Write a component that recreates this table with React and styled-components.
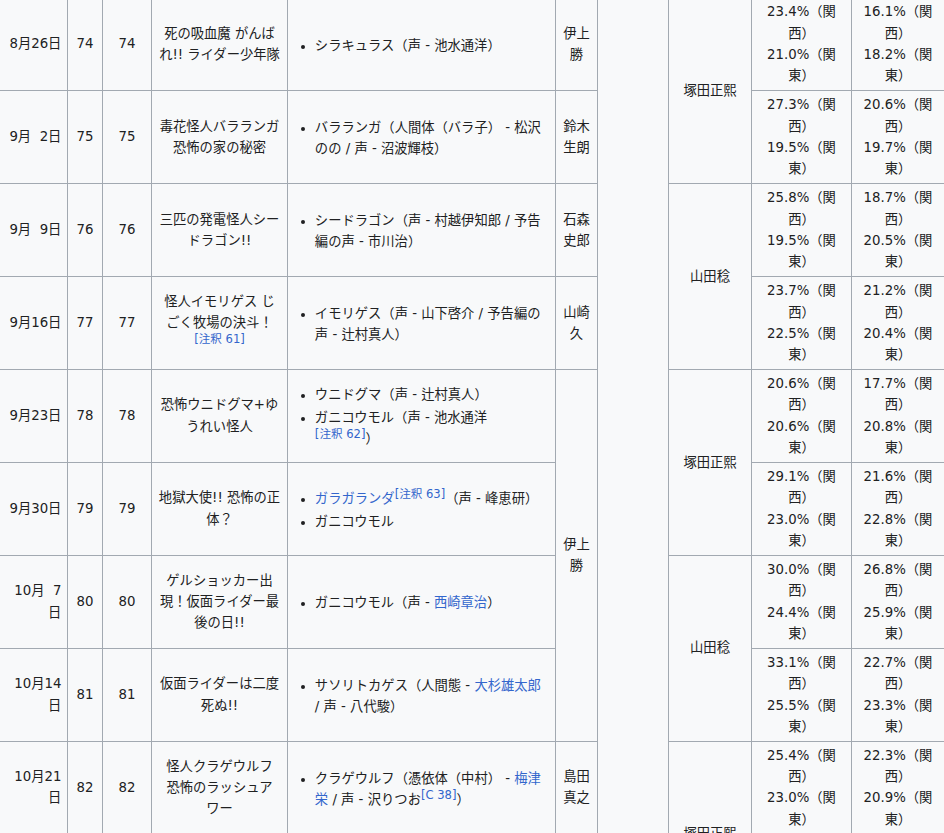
import React from 'react'
import styled, { createGlobalStyle } from 'styled-components'

const GlobalStyle = createGlobalStyle`
    body {
        margin: 0;
        background: #f8f9fa;
        overflow: hidden;
    }
`

const Table = styled.table`
    border-collapse: collapse;
    table-layout: fixed;
    width: 945px;
    margin: -3px 0 0 -1px;
    background: #f8f9fa;
    color: #202122;
    font-family: "DejaVu Sans", "Noto Sans CJK JP", sans-serif;
    font-size: 13.3px;
    line-height: 1.6;
    line-break: strict;
    border: 1px solid #a2a9b1;
`

const Cell = styled.td`
    border: 1px solid #a2a9b1;
    padding: 3.45px 5.6px;
    text-align: ${p => p.$align || 'center'};
    vertical-align: middle;
`

const Hidden = styled.span`
    visibility: hidden;
`

const CastList = styled.ul`
    margin: 0.3em 0 0 1.6em;
    padding: 0;
    list-style: disc;
`

const CastItem = styled.li`
    margin-bottom: 0.1em;
    &::marker {
        font-size: 0.9em;
    }
`

const Link = styled.a`
    color: #3366cc;
    text-decoration: none;
`

const Note = styled.sup`
    font-size: 87%;
    line-height: 1;
    white-space: nowrap;
    vertical-align: super;
`

const Ref = ({ children }) => (
    <Note><Link href="#">[{children}]</Link></Note>
)

const columns = [68, 35, 49, 136, 268, 42, 71, 83, 100, 93]

const episodes = [
    {
        date: <>8月26日</>, no: 74,
        title: <>死の吸血魔 がんばれ!! ライダー少年隊</>,
        cast: [<>シラキュラス（声 - 池水通洋）</>],
        writer: ['伊上勝', 1], director: ['塚田正熙', 2],
        rate: [['23.4', '21.0'], ['16.1', '18.2']],
    },
    {
        date: <>9月<Hidden>0</Hidden>2日</>, no: 75,
        title: <>毒花怪人バラランガ 恐怖の家の秘密</>,
        cast: [<>バラランガ（人間体（バラ子） - 松沢のの / 声 - 沼波輝枝）</>],
        writer: ['鈴木生朗', 1],
        rate: [['27.3', '19.5'], ['20.6', '19.7']],
    },
    {
        date: <>9月<Hidden>0</Hidden>9日</>, no: 76,
        title: <>三匹の発電怪人シードラゴン!!</>,
        cast: [<>シードラゴン（声 - 村越伊知郎 / 予告編の声 - 市川治）</>],
        writer: ['石森史郎', 1], director: ['山田稔', 2],
        rate: [['25.8', '19.5'], ['18.7', '20.5']],
    },
    {
        date: <>9月16日</>, no: 77,
        title: <>怪人イモリゲス じごく牧場の決斗！<Ref>注釈 61</Ref></>,
        cast: [<>イモリゲス（声 - 山下啓介 / 予告編の声 - 辻村真人）</>],
        writer: ['山崎久', 1],
        rate: [['23.7', '22.5'], ['21.2', '20.4']],
    },
    {
        date: <>9月23日</>, no: 78,
        title: <>恐怖ウニドグマ+ゆうれい怪人</>,
        cast: [
            <>ウニドグマ（声 - 辻村真人）</>,
            <>ガニコウモル（声 - 池水通洋<Ref>注釈 62</Ref>）</>,
        ],
        writer: ['伊上勝', 4], director: ['塚田正熙', 2],
        rate: [['20.6', '20.6'], ['17.7', '20.8']],
    },
    {
        date: <>9月30日</>, no: 79,
        title: <>地獄大使!! 恐怖の正体？</>,
        cast: [
            <><Link href="#">ガラガランダ</Link><Ref>注釈 63</Ref>（声 - 峰恵研）</>,
            <>ガニコウモル</>,
        ],
        rate: [['29.1', '23.0'], ['21.6', '22.8']],
    },
    {
        date: <>10月<Hidden>0</Hidden>7日</>, no: 80,
        title: <>ゲルショッカー出現！仮面ライダー最後の日!!</>,
        cast: [<>ガニコウモル（声 - <Link href="#">西崎章治</Link>）</>],
        director: ['山田稔', 2],
        rate: [['30.0', '24.4'], ['26.8', '25.9']],
    },
    {
        date: <>10月14日</>, no: 81,
        title: <>仮面ライダーは二度死ぬ!!</>,
        cast: [<>サソリトカゲス（人間態 - <Link href="#">大杉雄太郎</Link> / 声 - 八代駿）</>],
        rate: [['33.1', '25.5'], ['22.7', '23.3']],
    },
    {
        date: <>10月21日</>, no: 82,
        title: <>怪人クラゲウルフ 恐怖のラッシュアワー</>,
        cast: [<>クラゲウルフ（憑依体（中村） - <Link href="#">梅津栄</Link> / 声 - 沢りつお<Ref>C 38</Ref>）</>],
        writer: ['島田真之', 1], director: ['塚田正熙', 2],
        rate: [['25.4', '23.0'], ['22.3', '20.9']],
    },
    {
        date: <>10月28日</>, no: 83,
        title: <>怪人ヒルカメレオン 恐怖の吸血作戦</>,
        cast: [<>ヒルカメレオン（声 - 池水通洋）</>],
        writer: ['伊上勝', 1],
        rate: [['24.9', '22.1'], ['21.8', '20.6']],
    },
]

const Rating = ({ pair }) => (
    <Cell>
        {pair[0]}%（関西）<br />
        {pair[1]}%（関東）
    </Cell>
)

export default function App() {
    return (
        <>
            <GlobalStyle />
            <Table lang="ja">
                <colgroup>
                    {columns.map((w, i) => <col key={i} style={{ width: w }} />)}
                </colgroup>
                <tbody>
                    {episodes.map((ep, i) => (
                        <tr key={ep.no}>
                            <Cell $align="right">{ep.date}</Cell>
                            <Cell>{ep.no}</Cell>
                            <Cell>{ep.no}</Cell>
                            <Cell>{ep.title}</Cell>
                            <Cell $align="left">
                                <CastList>
                                    {ep.cast.map((c, j) => <CastItem key={j}>{c}</CastItem>)}
                                </CastList>
                            </Cell>
                            {ep.writer && <Cell rowSpan={ep.writer[1]}>{ep.writer[0]}</Cell>}
                            {i === 0 && <Cell rowSpan={episodes.length} />}
                            {ep.director && <Cell rowSpan={ep.director[1]}>{ep.director[0]}</Cell>}
                            <Rating pair={ep.rate[0]} />
                            <Rating pair={ep.rate[1]} />
                        </tr>
                    ))}
                </tbody>
            </Table>
        </>
    )
}
